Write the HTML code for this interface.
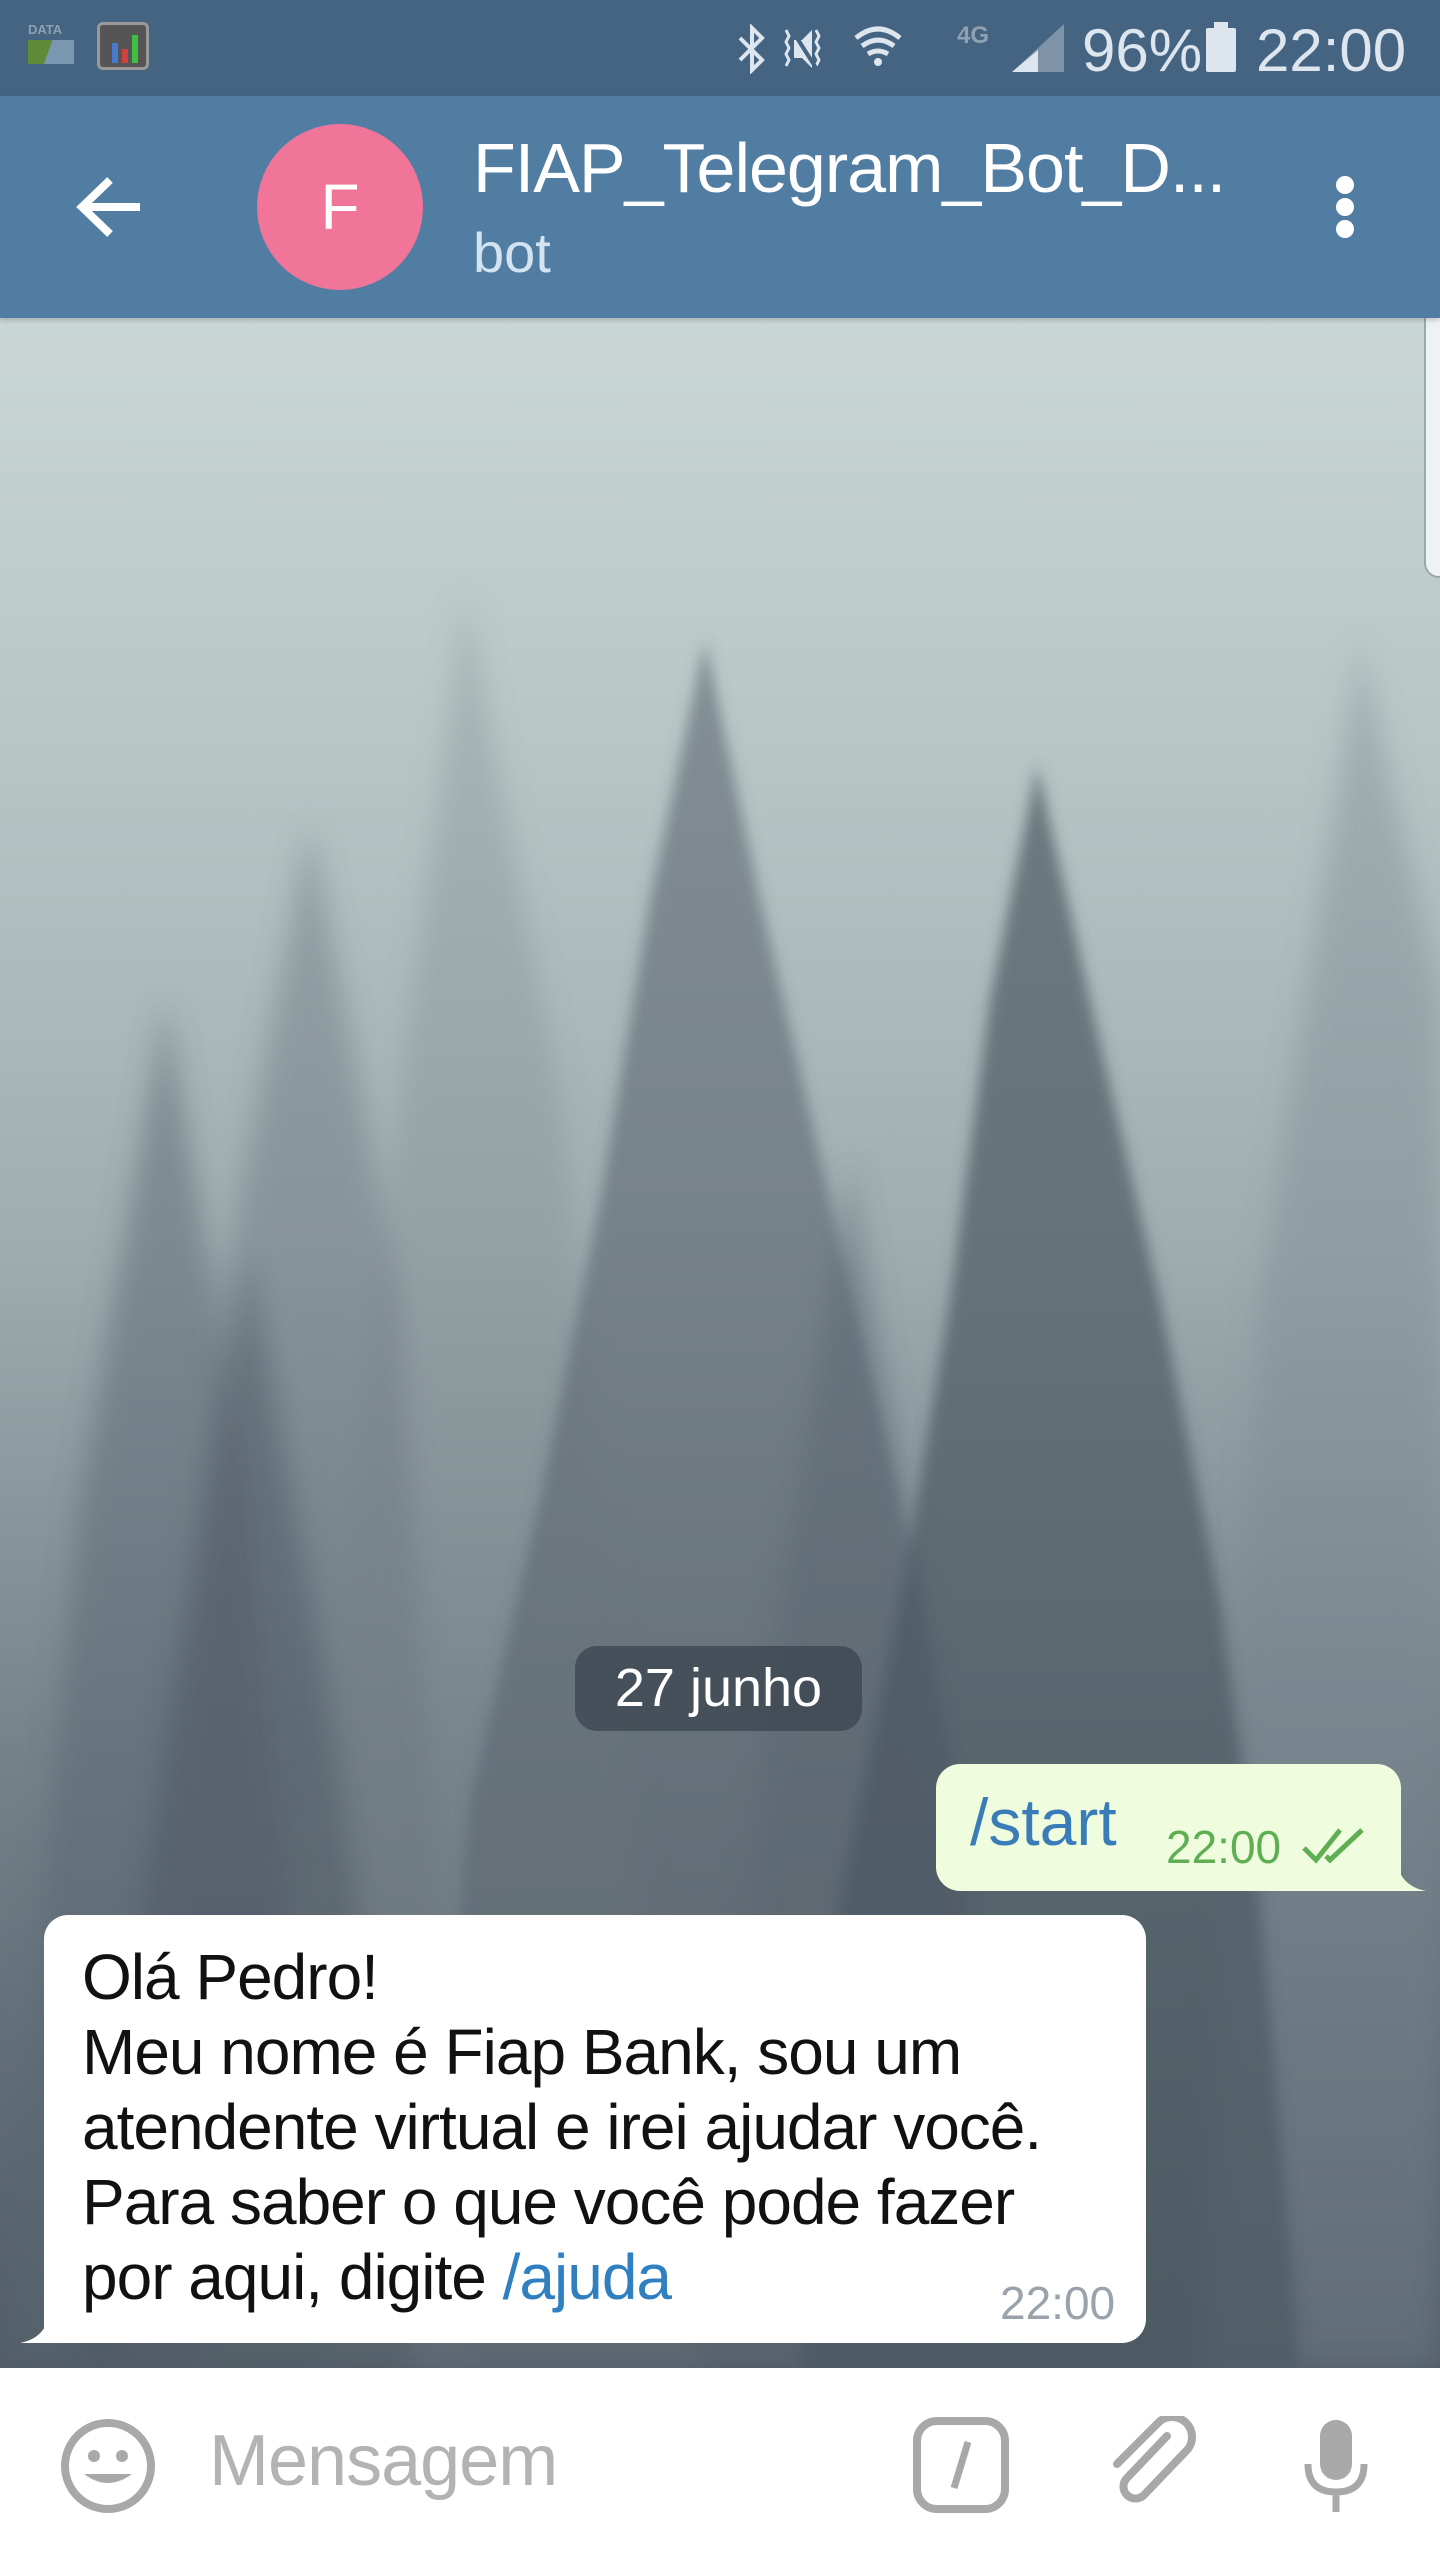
<!DOCTYPE html>
<html><head><meta charset="utf-8"><style>
*{margin:0;padding:0;box-sizing:border-box}
body{width:1440px;height:2560px;overflow:hidden;position:relative;font-family:"Liberation Sans",sans-serif;background:#7d8a90}
.abs{position:absolute}
#bg{left:0;top:318px;width:1440px;height:2050px;background:linear-gradient(180deg,#c9d6d4 0%,#b8c7c6 20%,#9fadb0 45%,#75828a 70%,#505b65 100%)}
#status{left:0;top:0;width:1440px;height:96px;background:#446482}
#header{left:0;top:96px;width:1440px;height:222px;background:#517da2;box-shadow:0 3px 4px rgba(0,0,0,.15)}
.sb{color:#dde5ee;font-size:60px;top:16px}
#avatar{left:257px;top:124px;width:166px;height:166px;border-radius:50%;background:#f07599;color:#fff;font-size:64px;text-align:center;line-height:166px}
#title{left:473px;top:128px;color:#fff;font-size:70px;letter-spacing:-1px;white-space:nowrap}
#sub{left:473px;top:220px;color:#d4e3f2;font-size:56px}
.dot{width:18px;height:18px;border-radius:50%;background:#fff;left:1336px}
#date{left:575px;top:1646px;width:287px;height:85px;border-radius:22px;background:rgba(55,66,76,.7);color:#fff;font-size:54px;text-align:center;line-height:85px}
#out{left:936px;top:1764px;width:465px;height:127px;background:#effdde;border-radius:24px 24px 4px 24px}
#in{left:44px;top:1915px;width:1102px;height:428px;background:#fff;border-radius:24px 24px 24px 4px}
#intext{left:82px;top:1940px;font-size:64px;line-height:75px;color:#111;letter-spacing:-1px;white-space:nowrap}
#bar{left:0;top:2368px;width:1440px;height:192px;background:#fff}
</style></head><body>
<div id="bg" class="abs">
<svg width="1440" height="2050" viewBox="0 318 1440 2050" style="position:absolute;left:0;top:0">
<defs><filter id="b" x="-20%" y="-20%" width="140%" height="140%"><feGaussianBlur stdDeviation="14"/></filter>
<filter id="b2" x="-20%" y="-20%" width="140%" height="140%"><feGaussianBlur stdDeviation="7"/></filter></defs>
<g filter="url(#b)">
<polygon points="465,590 560,1100 620,1700 700,2368 200,2368 330,1700 400,1100" fill="#7d8b90" opacity=".35"/>
<polygon points="1360,640 1440,1000 1440,2368 1200,2368 1260,1300" fill="#7a8890" opacity=".4"/>
<polygon points="310,820 400,1300 470,2368 120,2368 220,1300" fill="#6b7880" opacity=".45"/>
<polygon points="165,1000 250,1500 330,2368 0,2368 80,1500" fill="#5a666f" opacity=".5"/>
<polygon points="250,1250 330,1700 420,2368 80,2368 170,1700" fill="#4a5560" opacity=".45"/>
<polygon points="850,1160 920,1600 1000,2368 700,2368 780,1600" fill="#55616b" opacity=".45"/>
</g>
<g filter="url(#b2)">
<polygon points="705,640 760,900 830,1200 900,1500 960,1800 1000,2368 420,2368 470,1800 540,1500 600,1200 650,900" fill="#5a6670" opacity=".6"/>
<polygon points="1037,765 1090,1000 1160,1300 1220,1600 1260,1900 1300,2368 800,2368 840,1900 900,1600 950,1300 990,1000" fill="#4c5863" opacity=".7"/>
</g>
</svg>
<div class="abs" style="left:1424px;top:-60px;width:30px;height:320px;border-radius:16px;background:#eef2f4;border:2px solid #9aa"></div>
</div>
<div id="status" class="abs">
<div class="abs" style="left:28px;top:22px;color:#8fa0b0;font-size:13px;font-weight:bold">DATA</div>
<div class="abs" style="left:28px;top:40px;width:46px;height:24px;background:linear-gradient(110deg,#5e8a3a 45%,#7a96b0 45%)"></div>
<div class="abs" style="left:97px;top:22px;width:52px;height:48px;border-radius:6px;background:#555;border:3px solid #999">
<div class="abs" style="left:12px;top:18px;width:6px;height:20px;background:#4a7ad0"></div>
<div class="abs" style="left:22px;top:24px;width:6px;height:14px;background:#d04040"></div>
<div class="abs" style="left:32px;top:10px;width:6px;height:28px;background:#40c040"></div></div>
<svg class="abs" style="left:736px;top:24px" width="180" height="50"><path d="M4 14l22 22-10 10V4l10 10L4 36" stroke="#dde5ee" stroke-width="4" fill="none"/><path d="M50 6l3 6-3 6 3 6-3 6 3 6-3 6M80 6l3 6-3 6 3 6-3 6 3 6-3 6" stroke="#dde5ee" stroke-width="3" fill="none"/><path d="M58 16h8l10-10v38L66 34h-8z" fill="#dde5ee"/><path d="M56 6l24 38" stroke="#446482" stroke-width="4"/><path d="M120 14q22-18 44 0M126 22q16-12 32 0M132 30q10-6 20 0" stroke="#dde5ee" stroke-width="5" fill="none"/><circle cx="142" cy="38" r="4" fill="#dde5ee"/></svg>
<div class="abs" style="left:957px;top:22px;color:#8fa0b0;font-size:24px;font-weight:bold">4G</div>
<svg class="abs" style="left:1012px;top:24px" width="52" height="48"><polygon points="52,0 52,48 0,48" fill="#7f93a8"/><polygon points="26,26 26,48 0,48" fill="#dde5ee"/></svg>
<div class="abs sb" style="left:1082px">96%</div>
<div class="abs" style="left:1206px;top:28px;width:30px;height:44px;background:#dde5ee;border-radius:2px"></div>
<div class="abs" style="left:1214px;top:22px;width:14px;height:8px;background:#dde5ee"></div>
<div class="abs sb" style="left:1256px">22:00</div>
</div>
<div id="header" class="abs"></div>
<svg class="abs" style="left:76px;top:176px" width="68" height="62"><path d="M64 31H8M34 4 6 31l28 27" stroke="#fff" stroke-width="8" fill="none"/></svg>
<div id="avatar" class="abs">F</div>
<div id="title" class="abs">FIAP_Telegram_Bot_D...</div>
<div id="sub" class="abs">bot</div>
<div class="abs dot" style="top:176px"></div><div class="abs dot" style="top:198px"></div><div class="abs dot" style="top:220px"></div>
<div id="date" class="abs">27 junho</div>
<svg class="abs" style="left:1396px;top:1860px" width="30" height="32"><path d="M0 0 Q4 26 30 31 L0 31Z" fill="#effdde"/></svg>
<div id="out" class="abs"></div>
<div class="abs" style="left:970px;top:1784px;font-size:66px;color:#3a7cb8">/start</div>
<div class="abs" style="left:1166px;top:1820px;font-size:46px;color:#5fae54">22:00</div>
<svg class="abs" style="left:1300px;top:1826px" width="68" height="40"><path d="M4 22l12 12L40 4M26 30l4 4L62 4" stroke="#5fae54" stroke-width="5" fill="none"/></svg>
<svg class="abs" style="left:20px;top:2312px" width="30" height="32"><path d="M30 0 Q26 26 0 31 L30 31Z" fill="#fff"/></svg>
<div id="in" class="abs"></div>
<div id="intext" class="abs">Olá Pedro!<br>Meu nome é Fiap Bank, sou um<br>atendente virtual e irei ajudar você.<br>Para saber o que você pode fazer<br>por aqui, digite <span style="color:#2f7fc1">/ajuda</span></div>
<div class="abs" style="left:1000px;top:2276px;font-size:46px;color:#9aa3ab">22:00</div>
<div id="bar" class="abs"></div>
<svg class="abs" style="left:60px;top:2418px" width="96" height="96"><circle cx="48" cy="48" r="43" fill="none" stroke="#a8a8a8" stroke-width="8"/><circle cx="34" cy="38" r="6" fill="#a8a8a8"/><circle cx="62" cy="38" r="6" fill="#a8a8a8"/><path d="M24 56q24 18 48 0z" fill="#a8a8a8"/></svg>
<div class="abs" style="left:209px;top:2420px;font-size:72px;color:#b3b3b3;letter-spacing:-1px">Mensagem</div>
<svg class="abs" style="left:912px;top:2416px" width="98" height="98"><rect x="5" y="5" width="88" height="88" rx="20" fill="none" stroke="#a8a8a8" stroke-width="8"/><path d="M56 26 42 72" stroke="#a8a8a8" stroke-width="7"/></svg>
<svg class="abs" style="left:1105px;top:2416px" width="96" height="98"><path d="M62 20 22 62a12 12 0 0 0 17 17l44-46a20 20 0 0 0-28-28L12 48" stroke="#a8a8a8" stroke-width="8" fill="none" stroke-linecap="round"/></svg>
<svg class="abs" style="left:1300px;top:2416px" width="72" height="100"><rect x="20" y="4" width="32" height="60" rx="16" fill="#a8a8a8"/><path d="M8 48q0 28 28 28t28-28M36 76v20" stroke="#a8a8a8" stroke-width="7" fill="none"/></svg>
</body></html>
